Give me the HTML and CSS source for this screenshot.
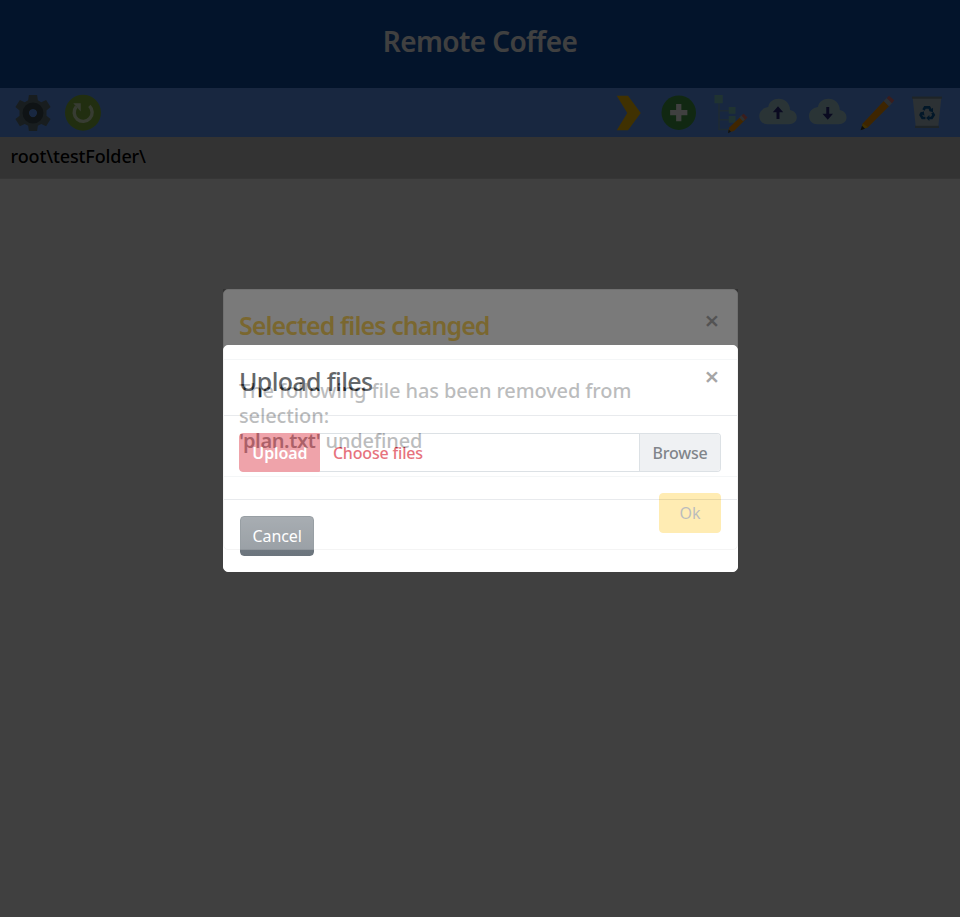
FILE: index.html
```html
<!DOCTYPE html>
<html lang="en">
<head>
<meta charset="utf-8">
<title>Remote Coffee</title>
<link rel="stylesheet" href="styles.css">
</head>
<body>
<header class="banner"><h1>Remote Coffee</h1></header>
<nav class="toolbar">
  <svg class="icon" viewBox="0 0 48 48"><path fill="#60757b" d="M18.500 0h11l1 7 4.500 2.500 6.500-3 6 9.500-5.500 4.500v7l5.500 4.500-6 9.500-6.500-3-4.500 2.500-1 7h-11l-1-7-4.500-2.500-6.500 3-6-9.500 5.500-4.500v-7L.5 16l6-9.500 6.500 3L17.500 7zM24 18.500a5.500 5.500 0 1 0 0 11 5.500 5.500 0 0 0 0-11z"/><path fill="#3c4c54" fill-rule="evenodd" d="M24 10a14 14 0 1 0 0 28 14 14 0 0 0 0-28zm0 19.500a5.500 5.500 0 1 1 0-11 5.500 5.500 0 0 1 0 11z"/></svg>
  <svg class="icon" viewBox="0 0 48 48"><circle cx="24" cy="23.500" r="24" fill="#84b840"/><path fill="none" stroke="#dcedc8" stroke-width="4.500" d="M32.500 14.500A12 12 0 1 1 15 15.500"/><path fill="#dcedc8" d="M11 11h10v11z"/></svg>
  <span class="spacer"></span>
  <svg class="icon" viewBox="0 0 48 48"><path fill="#ffc107" d="M9 1h15l17 23-17 23H9l14-23z"/></svg>
  <svg class="icon" viewBox="0 0 48 48"><circle cx="25" cy="23.500" r="23" fill="#43a047"/><path fill="#fff" d="M21.500 12h7v8h8v7h-8v8h-7v-8h-8v-7h8z"/></svg>
  <svg class="icon" viewBox="0 0 48 48"><g transform="translate(4 0)"><path fill="none" stroke="#78a8cc" stroke-width="2" d="M8 11v35h14M8 21h14M8 33h14"/><path fill="#80cbc4" d="M2 0h11v11H2zM21 16h9v9h-9zM21 28h9v9h-9z"/><path fill="#ff9800" d="M22 43l17-16 5 5-16 16-8 2z"/><path fill="#b0bec5" d="M35 30l3-3 5 5-3 3z"/><path fill="#e57373" d="M38 27l3-2 5 5-3 3z"/><path fill="#37474f" d="M21 46l3 3-4 2z"/></g></svg>
  <svg class="icon" viewBox="0 0 48 48"><path fill="#a8d0d8" d="M40 20c0-9-7-15-15-15-7 0-13 4-14 11C4 17-1 22-1 28c0 7 5 11 11 11h28c7 0 11-4 11-9s-3-9-9-10z"/><path fill="#282a80" d="M24 15l7 8h-5v9h-4v-9h-5z"/></svg>
  <svg class="icon" viewBox="0 0 48 48"><g transform="translate(1 0)"><path fill="#a8d0d8" d="M40 20c0-9-7-15-15-15-7 0-13 4-14 11C4 17-1 22-1 28c0 7 5 11 11 11h28c7 0 11-4 11-9s-3-9-9-10z"/><path fill="#282a80" d="M24 33l7-8h-5v-9h-4v9h-5z"/></g></svg>
  <svg class="icon" viewBox="0 0 48 48"><path fill="#f59400" d="M5 38L33 8l7 7-28 28-8 3z"/><path fill="#b0bec5" d="M33 8l4-4 7 7-4 4z"/><path fill="#e57373" d="M37 4l3-3 7 6-3 4z"/><path fill="#ffc107" d="M5 38l7 5-9 3z"/><path fill="#263238" d="M4 41l4 4-6 2z"/></svg>
  <svg class="icon" viewBox="0 0 48 48"><path fill="#b0c4ce" d="M5 4h38l-4 38H9z"/><path fill="#78909c" d="M4 2h40v3H4zM8 41h32v3H8z"/><g transform="translate(3 2) scale(.88)" fill="none" stroke="#0a5ca0" stroke-width="4"><path d="M18.500 20.500l2.300-4h6.400l2.600 4.500M32 24.500l2 3.500-3 4.500h-4.500M21.500 32.500H17L14.200 28l2.300-4"/><path fill="#0a5ca0" stroke="none" d="M33 17v7l-6.500-2zM27.500 28v9l-5-4.500zM12.500 25.500l6.500-3 1 6.500z"/></g></svg>
</nav>
<div class="path"><span>root\testFolder\</span></div>
<div class="backdrop"></div>

<div class="layer layer-upload"><section class="modal">
  <div class="head"><h5>Upload files</h5><button class="close">×</button></div>
  <div class="body"><div class="group">
    <button class="btn danger">Upload</button>
    <label class="file"><span>Choose files</span><span class="browse">Browse</span></label>
  </div></div>
  <div class="foot"><button class="btn secondary">Cancel</button></div>
</section></div>

<div class="layer layer-notice"><section class="modal">
  <div class="head"><h5 class="warn">Selected files changed</h5><button class="close">×</button></div>
  <div class="body message">The following file has been removed from<br>selection:<br><b>'plan.txt'</b> undefined</div>
  <div class="foot end"><button class="btn warning">Ok</button></div>
</section></div>
</body>
</html>
```
FILE: styles.css
```css
* { box-sizing: border-box; }
body { margin: 0; background: #fff; font-family: "Noto Sans", sans-serif; font-size: 16px; line-height: 24px; color: #212529; height: 917px; overflow: hidden; }
h1, h5 { margin: 0; }
.banner { height: 88px; background: #0c50ac; color: #fff; padding-top: 21px; text-align: center; }
h1 { font-size: 28px; line-height: 40px; font-weight: 600; letter-spacing: -0.600px; }
.toolbar { height: 49px; background: #609cff; display: flex; align-items: center; padding: 0 15px; gap: 13.800px; }
.icon { width: 36px; height: 36px; flex: none; overflow: visible; }
.spacer { flex: 1; }
.path { height: 42px; background: #ccc; color: #000; padding: 7px 10.500px; font-size: 18px; font-weight: 500; letter-spacing: -0.120px; border-bottom: 1px solid #d8d8d8; }
.backdrop { position: fixed; inset: 0; background: rgba(0, 0, 0, .75); }
.layer { position: fixed; inset: 0; display: flex; justify-content: center; align-items: flex-start; padding-left: 1px; }
.layer-upload { padding-top: 345px; }
.layer-notice { padding-top: 289px; opacity: .3; }
.modal { width: 515px; background: #fff; border: 1px solid #fff; border-radius: 5px; }
.layer-notice .modal { border-color: #ddd; }
.head { height: 70px; padding: 17px 15px; display: flex; justify-content: space-between; border-bottom: 1px solid #dee2e6; }
h5 { font-size: 25px; line-height: 37px; font-weight: 500; letter-spacing: -0.640px; white-space: nowrap; }
.warn { color: #ffc107; font-weight: 600; letter-spacing: -0.950px; }
.close { border: 0; background: none; padding: 0; width: 20px; height: 27px; font: 600 26px/27px "Noto Sans", sans-serif; color: #000; opacity: .5; }
.body { padding: 17px 16px 17px 15.400px; height: 84px; border-bottom: 1px solid #dee2e6; }
.message { height: 117px; padding: 18px 15px; font-size: 20px; line-height: 25px; font-weight: 500; letter-spacing: -0.120px; white-space: nowrap; }
.message b { font-weight: 600; letter-spacing: -0.400px; }
.group { display: flex; height: 39px; }
.btn { height: 40px; border: 1px solid; border-radius: 4px; padding: 0 12px; font: 400 16px/24px "Noto Sans", sans-serif; letter-spacing: -0.100px; color: #fff; white-space: nowrap; }
.danger { width: 81px; height: 39px; padding: 0; border-radius: 4px 0 0 4px; background: #dc3545; border-color: #dc3545; opacity: .65; font-weight: 600; }
.file { flex: 1; display: flex; justify-content: space-between; border: 1px solid #ced4da; border-left: 0; border-radius: 0 4px 4px 0; padding-left: 12.500px; color: #dc3545; line-height: 38px; font-weight: 500; letter-spacing: -0.180px; }
.browse { width: 81px; height: 37px; text-align: center; border-left: 1px solid #ced4da; background: #e9ecef; color: #495057; border-radius: 0 3px 3px 0; }
.foot { padding: 16px 16px 16px 15.500px; display: flex; height: 71px; }
.end { justify-content: flex-end; }
.secondary { width: 74px; background: linear-gradient(#828a91, #6c757d); border-color: #6c757d; }
.layer-notice .foot { height: 72px; }
.warning { width: 62px; background: #ffc107; border-color: #ffc107; color: #212529; }
```
